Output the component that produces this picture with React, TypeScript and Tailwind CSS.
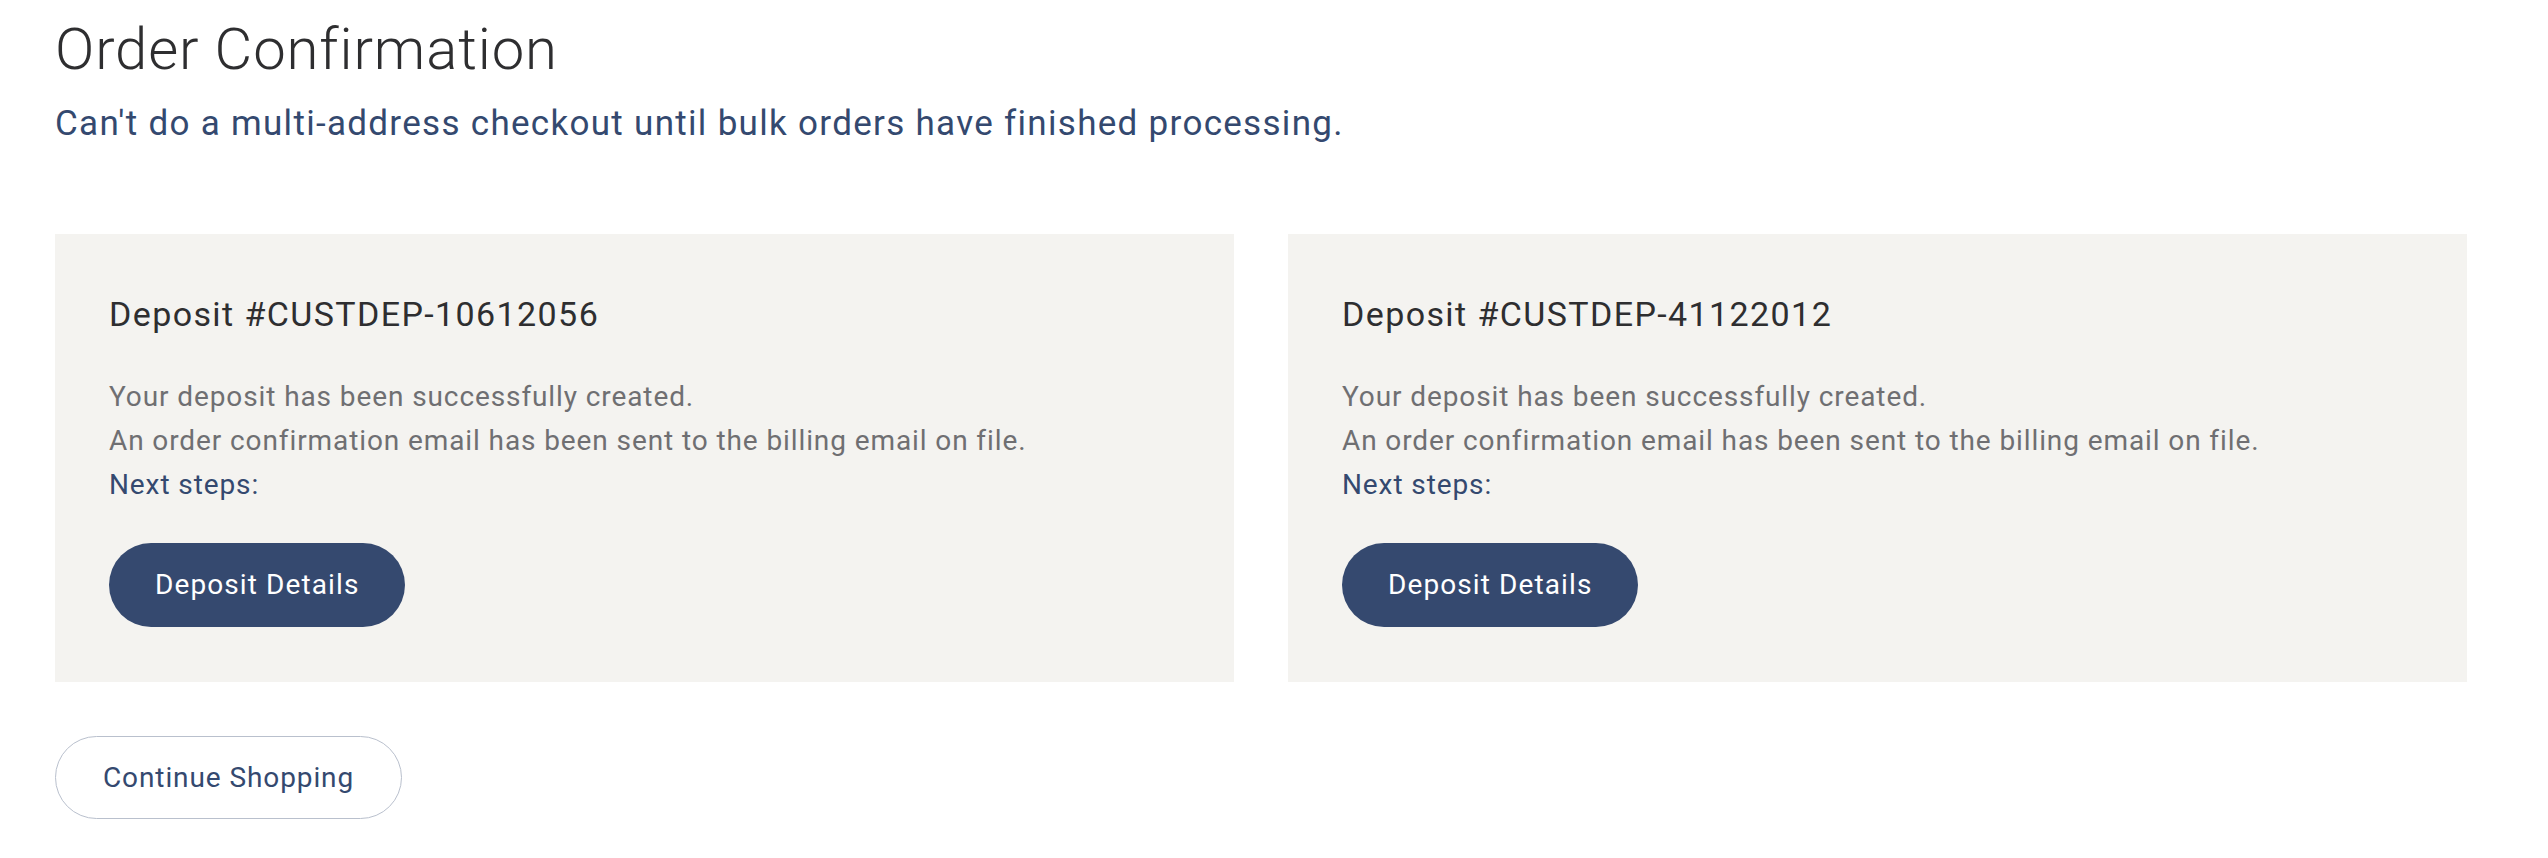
const deposits = ["CUSTDEP-10612056", "CUSTDEP-41122012"];

const DepositCard = ({ id }: { id: string }) => {
  return (
    <div className="bg-[#f4f3f0] pt-[63px] pb-[55px] px-[54px]">
      <h2 className="text-[34px] leading-none tracking-[1.4px] text-[#2e2e30]">Deposit #{id}</h2>
      <div className="mt-[44px] text-[28px] leading-[44px] tracking-[0.9px]">
        <p className="text-[#6f6f72]">Your deposit has been successfully created.</p>
        <p className="text-[#6f6f72]">An order confirmation email has been sent to the billing email on file.</p>
        <p className="text-[#34496f]">Next steps:</p>
      </div>
      <button className="mt-[36px] h-[84px] px-[46px] rounded-full bg-[#35496f] text-white text-[28px] tracking-[1.1px]">
        Deposit Details
      </button>
    </div>
  );
};

const App = () => {
  return (
    <div className="min-h-screen bg-white pt-[20px] px-[55px] font-['Roboto',sans-serif]">
      <h1 className="text-[58px] leading-none font-light tracking-[0.9px] text-[#2e2e30]">Order Confirmation</h1>
      <p className="mt-[28px] text-[35px] leading-none tracking-[1.3px] text-[#34496f]">
        Can't do a multi-address checkout until bulk orders have finished processing.
      </p>
      <div className="mt-[93px] w-[2412px] grid grid-cols-2 gap-[54px]">
        {deposits.map((d) => (
          <DepositCard key={d} id={d} />
        ))}
      </div>
      <button className="mt-[54px] h-[83px] px-[47px] rounded-full border border-[#b9c0cd] bg-white text-[#34496f] text-[28px] tracking-[0.9px]">
        Continue Shopping
      </button>
    </div>
  );
};

export default App;
